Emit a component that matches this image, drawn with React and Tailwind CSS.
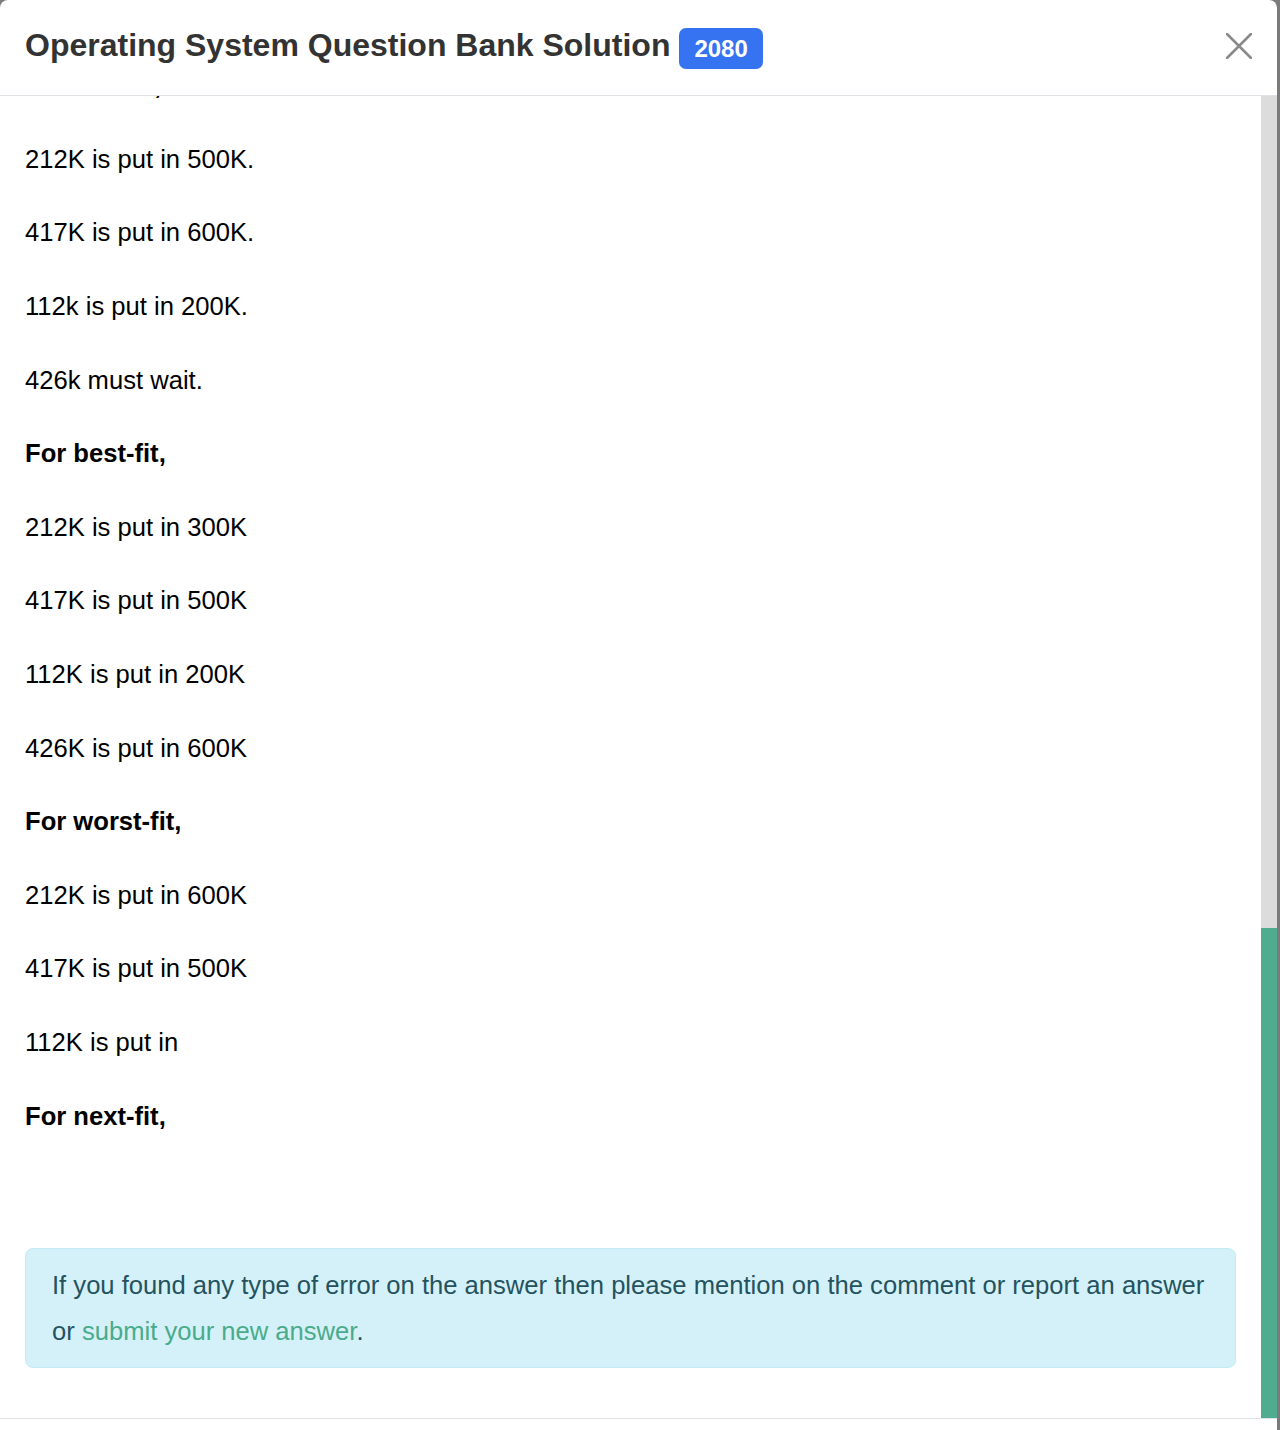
import { useLayoutEffect, useRef } from 'react'

const lines = [
  { text: 'For first-fit,', bold: true },
  { text: '212K is put in 500K.' },
  { text: '417K is put in 600K.' },
  { text: '112k is put in 200K.' },
  { text: '426k must wait.' },
  { text: 'For best-fit,', bold: true },
  { text: '212K is put in 300K' },
  { text: '417K is put in 500K' },
  { text: '112K is put in 200K' },
  { text: '426K is put in 600K' },
  { text: 'For worst-fit,', bold: true },
  { text: '212K is put in 600K' },
  { text: '417K is put in 500K' },
  { text: '112K is put in' },
  { text: 'For next-fit,', bold: true },
]

const CloseIcon = () => (
  <svg width="26" height="26" viewBox="0 0 26 26" fill="none" stroke="#8a8a8a" strokeWidth="2.6" strokeLinecap="round">
    <path d="M1 1L25 25M25 1L1 25" />
  </svg>
)

export default function App() {
  const bodyRef = useRef(null)

  // the answer is shown scrolled to its end
  useLayoutEffect(() => {
    const el = bodyRef.current
    if (el) el.scrollTop = el.scrollHeight
  }, [])

  return (
    <div className="w-[1280px] h-[1430px] bg-[#7b7b7b] overflow-hidden" style={{ fontFamily: '"Liberation Sans", Arial, sans-serif' }}>
      <div className="w-[1277px] h-full bg-white rounded-t-[8px] flex flex-col overflow-hidden">
        {/* ── Header ─────────────────────────────────────────── */}
        <div className="h-[96px] shrink-0 border-b border-[#dee2e6] pl-[25px] pr-[25px] pt-[25px] flex items-start justify-between">
          <div className="flex items-start gap-[9px]">
            <h5 className="text-[32px] font-bold text-[#333333] leading-[40px]">
              Operating System Question Bank Solution
            </h5>
            <span className="mt-[3px] h-[41px] px-[15px] flex items-center rounded-[7px] bg-[#3573f1] text-white text-[24px] font-bold leading-none">
              2080
            </span>
          </div>
          <button aria-label="Close" className="w-[26px] h-[26px] mt-[8px]">
            <CloseIcon />
          </button>
        </div>

        {/* ── Body ───────────────────────────────────────────── */}
        <div className="flex-1 min-h-0 flex">
          <div ref={bodyRef} className="flex-1 min-w-0 overflow-hidden text-black">
            <div className="px-[25px] pt-[25px] pb-[50px]">
              <p className="text-[25.6px] leading-[37.6px] mb-[36px]">
                Given memory partitions of 100K, 500K, 200K, 300K and 600K (in order), how would each of the first-fit,
                best-fit, worst-fit and next-fit algorithms place processes of 212K, 417K, 112K and 426K (in order)?
              </p>
              {lines.map((l, i) => (
                <p key={i} className={`text-[25.6px] leading-[37.6px] mb-[36px] ${l.bold ? 'font-bold' : ''}`}>
                  {l.text}
                </p>
              ))}

              <div className="mt-[113px] rounded-[8px] border border-[#c3eaf5] bg-[#d4f1f9] px-[26px] py-[13px] text-[25.6px] leading-[46px] text-[#24535f]">
                If you found any type of error on the answer then please mention on the comment or report an answer or{' '}
                <a href="#" className="text-[#4aab8a]">submit your new answer</a>.
              </div>
            </div>
          </div>

          {/* scrollbar */}
          <div className="w-[16px] shrink-0 bg-[#dcdcdc] flex flex-col">
            <div className="flex-1" />
            <div className="h-[490px] bg-[#4fac8f]" />
          </div>
        </div>

        {/* ── Footer ─────────────────────────────────────────── */}
        <div className="h-[12px] shrink-0 border-t border-[#dee2e6]" />
      </div>
    </div>
  )
}
